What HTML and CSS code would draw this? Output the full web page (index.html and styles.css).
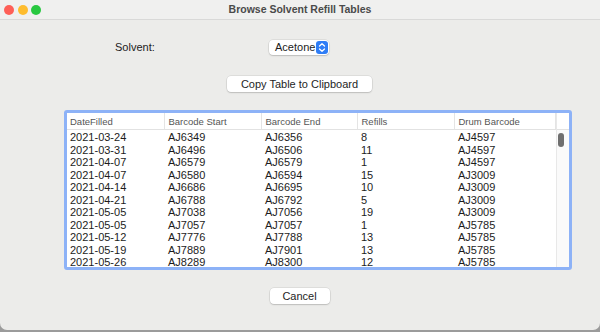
FILE: index.html
```html
<!DOCTYPE html>
<html>
  <head>
    <link rel="stylesheet" href="styles.css">
  </head>
  <body>
    <div class="window">
      <div class="titlebar">
        <div class="lights">
          <span class="light red"></span>
          <span class="light yellow"></span>
          <span class="light green"></span>
        </div>
        <div class="title">Browse Solvent Refill Tables</div>
      </div>

      <div class="content">
        <div class="solventRow">
          <div class="label">Solvent:</div>
          <div class="popup">
            <span>Acetone</span>
            <span class="stepper">
              <svg width="12" height="13" viewBox="0 0 12 13">
                <path d="M3.5 5 L6 2.8 L8.5 5" fill="none" stroke="#fff" stroke-width="1.3" stroke-linecap="round" stroke-linejoin="round"/>
                <path d="M3.5 8 L6 10.2 L8.5 8" fill="none" stroke="#fff" stroke-width="1.3" stroke-linecap="round" stroke-linejoin="round"/>
              </svg>
            </span>
          </div>
        </div>

        <div class="btnRow">
          <div class="btn copyBtn">Copy Table to Clipboard</div>
        </div>

        <div class="tableFrame">
          <div class="tableInner">
            <table class="grid">
              <colgroup>
                <col class="c1"><col class="c2"><col class="c3"><col class="c4"><col class="c5">
              </colgroup>
              <thead>
                <tr><th>DateFilled</th><th>Barcode Start</th><th>Barcode End</th><th>Refills</th><th>Drum Barcode</th></tr>
              </thead>
              <tbody>
                <tr><td>2021-03-24</td><td>AJ6349</td><td>AJ6356</td><td>8</td><td>AJ4597</td></tr>
                <tr><td>2021-03-31</td><td>AJ6496</td><td>AJ6506</td><td>11</td><td>AJ4597</td></tr>
                <tr><td>2021-04-07</td><td>AJ6579</td><td>AJ6579</td><td>1</td><td>AJ4597</td></tr>
                <tr><td>2021-04-07</td><td>AJ6580</td><td>AJ6594</td><td>15</td><td>AJ3009</td></tr>
                <tr><td>2021-04-14</td><td>AJ6686</td><td>AJ6695</td><td>10</td><td>AJ3009</td></tr>
                <tr><td>2021-04-21</td><td>AJ6788</td><td>AJ6792</td><td>5</td><td>AJ3009</td></tr>
                <tr><td>2021-05-05</td><td>AJ7038</td><td>AJ7056</td><td>19</td><td>AJ3009</td></tr>
                <tr><td>2021-05-05</td><td>AJ7057</td><td>AJ7057</td><td>1</td><td>AJ5785</td></tr>
                <tr><td>2021-05-12</td><td>AJ7776</td><td>AJ7788</td><td>13</td><td>AJ5785</td></tr>
                <tr><td>2021-05-19</td><td>AJ7889</td><td>AJ7901</td><td>13</td><td>AJ5785</td></tr>
                <tr><td>2021-05-26</td><td>AJ8289</td><td>AJ8300</td><td>12</td><td>AJ5785</td></tr>
              </tbody>
            </table>
            <div class="scrollCol">
              <div class="scrollHead"></div>
              <div class="thumb"></div>
            </div>
          </div>
        </div>

        <div class="btnRow cancelRow">
          <div class="btn cancelBtn">Cancel</div>
        </div>
      </div>
    </div>
  </body>
</html>
```

FILE: styles.css
```css
body {
  margin: 0;
  width: 600px;
  height: 332px;
  background-color: #9b9b9b;
  font-family: "Liberation Sans", Arial, sans-serif;
  color: #1c1c1c;
  overflow: hidden;
}

.window {
  width: 600px;
  height: 330px;
  background-color: #ececea;
  border-radius: 0 0 7px 7px;
  overflow: hidden;
}

.titlebar {
  height: 19px;
  background-color: #f0f0ef;
  border-bottom: 1px solid #d9d9d8;
  display: flex;
  align-items: center;
  position: relative;
}

.lights {
  display: flex;
  gap: 3.5px;
  padding-left: 4px;
}

.light {
  width: 10px;
  height: 10px;
  border-radius: 50%;
  display: inline-block;
}

.red { background-color: #fe5f57; }
.yellow { background-color: #febc2e; }
.green { background-color: #28c840; }

.title {
  position: absolute;
  left: 0;
  right: 0;
  top: 1px;
  text-align: center;
  font-size: 10.5px;
  font-weight: bold;
  color: #4a4a4a;
  line-height: 16px;
}

.content {
  display: flex;
  flex-direction: column;
}

.solventRow {
  display: flex;
  align-items: center;
  margin-top: 19px;
  height: 16px;
  padding-left: 115px;
}

.label {
  font-size: 11px;
  width: 154px;
  color: #222;
}

.popup {
  width: 60px;
  height: 15px;
  background-color: #fff;
  border-radius: 4px;
  box-shadow: 0 0 0 0.5px rgba(0, 0, 0, 0.12), 0 1px 1.5px rgba(0, 0, 0, 0.15);
  display: flex;
  align-items: center;
  justify-content: space-between;
  padding: 0 1px 0 6px;
  box-sizing: border-box;
  font-size: 11px;
}

.stepper {
  width: 12px;
  height: 13px;
  background-color: #2f7df6;
  border-radius: 3px;
  display: flex;
}

.btnRow {
  display: flex;
  justify-content: center;
}

.btn {
  height: 16px;
  background-color: #fff;
  border-radius: 4px;
  box-shadow: 0 0 0 0.5px rgba(0, 0, 0, 0.12), 0 1px 1.5px rgba(0, 0, 0, 0.15);
  font-size: 11px;
  line-height: 16px;
  text-align: center;
  color: #1e1e1e;
}

.copyBtn {
  width: 145px;
  margin-top: 21px;
  margin-left: -1px;
}

.tableFrame {
  margin: 18px 0 0 64px;
  width: 508px;
  height: 160px;
  box-sizing: border-box;
  border: 3px solid #8db2f7;
  border-radius: 3px;
  overflow: hidden;
}

.tableInner {
  display: flex;
  height: 100%;
  background-color: #fff;
  position: relative;
}

.grid {
  width: 488px;
  table-layout: fixed;
  border-collapse: collapse;
  align-self: flex-start;
}

.c1 { width: 97px; }
.c2 { width: 97px; }
.c3 { width: 96px; }
.c4 { width: 97px; }
.c5 { width: 101px; }

.grid th {
  height: 16px;
  padding: 0 0 0 4px;
  font-size: 9.5px;
  font-weight: normal;
  color: #555;
  text-align: left;
  border-bottom: 1px solid #e2e2e2;
  border-right: 1px solid #e4e4e4;
}

.grid td {
  height: 12.5px;
  padding: 0 0 0 4px;
  font-size: 11px;
  line-height: 12.5px;
  white-space: nowrap;
}

.grid th:first-child,
.grid td:first-child {
  padding-left: 3px;
}

.grid tbody tr:first-child td {
  padding-top: 1px;
}

.scrollCol {
  width: 14px;
  background-color: #fafafa;
  border-left: 1px solid #e8e8e8;
}

.scrollHead {
  height: 16px;
  border-bottom: 1px solid #e2e2e2;
  background-color: #fff;
}

.thumb {
  position: absolute;
  right: 5px;
  top: 20px;
  width: 6px;
  height: 14px;
  border-radius: 3px;
  background-color: #6f6f6f;
}

.cancelBtn {
  width: 60px;
  margin-top: 18px;
  margin-left: -1px;
}
```
